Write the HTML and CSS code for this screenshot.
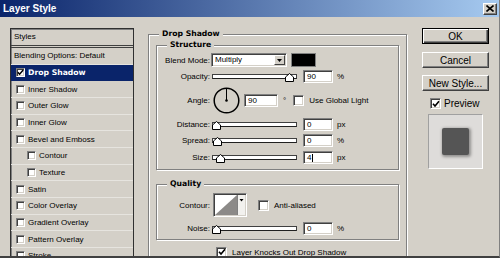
FILE: index.html
```html
<!DOCTYPE html>
<html lang="en">
<head>
  <meta charset="UTF-8">
  <title>Layer Style</title>
  <meta name="viewport" content="width=device-width, initial-scale=1">
  <link rel="stylesheet" href="styles.css">
</head>
<body>

<div class="window">
  <div class="titlebar">
    <span class="title">Layer Style</span>
    <span class="close">
      <svg width="8" height="7" viewBox="0 0 8 7"><path d="M0.5 0.5 L7.5 6.5 M7.5 0.5 L0.5 6.5" stroke="#000" stroke-width="1.6"/></svg>
    </span>
  </div>

  <div class="body">
    <div class="styles">
      <div class="styles-head">Styles</div>
      <div class="item">Blending Options: Default</div>
      <div class="item selected"><span class="cb sm"><svg width="7" height="7" viewBox="0 0 7 7"><polyline points="0.8,3.2 2.6,5.2 6.2,1" fill="none" stroke="#000" stroke-width="1.5"/></svg></span>Drop Shadow</div>
      <div class="item"><span class="cb sm"></span>Inner Shadow</div>
      <div class="item"><span class="cb sm"></span>Outer Glow</div>
      <div class="item"><span class="cb sm"></span>Inner Glow</div>
      <div class="item"><span class="cb sm"></span>Bevel and Emboss</div>
      <div class="item sub"><span class="cb sm"></span>Contour</div>
      <div class="item sub"><span class="cb sm"></span>Texture</div>
      <div class="item"><span class="cb sm"></span>Satin</div>
      <div class="item"><span class="cb sm"></span>Color Overlay</div>
      <div class="item"><span class="cb sm"></span>Gradient Overlay</div>
      <div class="item"><span class="cb sm"></span>Pattern Overlay</div>
      <div class="item"><span class="cb sm"></span>Stroke</div>
    </div>

    <fieldset class="group">
      <legend>Drop Shadow</legend>

      <fieldset class="sub-group structure">
        <legend>Structure</legend>

        <div class="row r-blend">
          <span class="lbl">Blend Mode:</span>
          <div class="select">
            <span class="select-text">Multiply</span>
            <span class="arrow-btn"><svg width="5" height="3" viewBox="0 0 5 3"><polygon points="0,0 5,0 2.5,3" fill="#000"/></svg></span>
          </div>
          <span class="swatch"></span>
        </div>

        <div class="row r-opacity">
          <span class="lbl">Opacity:</span>
          <div class="slider">
            <div class="track"></div>
            <svg class="thumb" style="left:73px" width="9" height="9" viewBox="0 0 9 9"><polygon points="0.5,4 4.5,0.5 8.5,4 8.5,8.5 0.5,8.5" fill="#fff" stroke="#000"/></svg>
          </div>
          <span class="num">90</span>
          <span class="unit">%</span>
        </div>

        <div class="row r-angle">
          <span class="lbl">Angle:</span>
          <svg class="dial" width="27" height="27" viewBox="0 0 27 27">
            <circle cx="13.5" cy="13.5" r="12.3" fill="none" stroke="#000" stroke-width="1.5"/>
            <line x1="13.5" y1="13.5" x2="13.5" y2="2" stroke="#000" stroke-width="1"/>
            <circle cx="13.5" cy="13.5" r="1.3" fill="#000"/>
          </svg>
          <span class="num wide">90</span>
          <span class="unit deg">°</span>
          <span class="cb global"></span>
          <span class="cb-text">Use Global Light</span>
        </div>

        <div class="row r-dist">
          <span class="lbl">Distance:</span>
          <div class="slider">
            <div class="track"></div>
            <svg class="thumb" style="left:0px" width="9" height="9" viewBox="0 0 9 9"><polygon points="0.5,4 4.5,0.5 8.5,4 8.5,8.5 0.5,8.5" fill="#fff" stroke="#000"/></svg>
          </div>
          <span class="num">0</span>
          <span class="unit">px</span>
        </div>

        <div class="row r-spread">
          <span class="lbl">Spread:</span>
          <div class="slider">
            <div class="track"></div>
            <svg class="thumb" style="left:1px" width="9" height="9" viewBox="0 0 9 9"><polygon points="0.5,4 4.5,0.5 8.5,4 8.5,8.5 0.5,8.5" fill="#fff" stroke="#000"/></svg>
          </div>
          <span class="num">0</span>
          <span class="unit">%</span>
        </div>

        <div class="row r-size">
          <span class="lbl">Size:</span>
          <div class="slider">
            <div class="track"></div>
            <svg class="thumb" style="left:4px" width="9" height="9" viewBox="0 0 9 9"><polygon points="0.5,4 4.5,0.5 8.5,4 8.5,8.5 0.5,8.5" fill="#fff" stroke="#000"/></svg>
          </div>
          <span class="num">4<span class="caret"></span></span>
          <span class="unit">px</span>
        </div>
      </fieldset>

      <fieldset class="sub-group quality">
        <legend>Quality</legend>

        <div class="row r-contour">
          <span class="lbl">Contour:</span>
          <span class="contour">
            <svg width="30" height="20" viewBox="0 0 30 20">
              <rect x="0" y="0" width="22" height="20" fill="#fff"/>
              <polygon points="0,20 22,0 22,20" fill="#8c8a88"/>
              <rect x="22" y="0" width="1" height="20" fill="#808080"/>
              <rect x="23" y="0" width="7" height="20" fill="#f2f1ee"/>
              <polygon points="24.5,4 28.5,4 26.5,6.5" fill="#000"/>
            </svg>
          </span>
          <span class="cb aa"></span>
          <span class="cb-text">Anti-aliased</span>
        </div>

        <div class="row r-noise">
          <span class="lbl">Noise:</span>
          <div class="slider">
            <div class="track"></div>
            <svg class="thumb" style="left:0px" width="9" height="9" viewBox="0 0 9 9"><polygon points="0.5,4 4.5,0.5 8.5,4 8.5,8.5 0.5,8.5" fill="#fff" stroke="#000"/></svg>
          </div>
          <span class="num">0</span>
          <span class="unit">%</span>
        </div>
      </fieldset>

      <div class="knock">
        <span class="cb"><svg width="8" height="8" viewBox="0 0 8 8"><polyline points="1,3.8 3,6 7,1.2" fill="none" stroke="#000" stroke-width="1.6"/></svg></span>
        <span class="cb-text">Layer Knocks Out Drop Shadow</span>
      </div>
    </fieldset>

    <div class="side">
      <div class="btn default">OK</div>
      <div class="btn cancel">Cancel</div>
      <div class="btn new">New Style...</div>
      <div class="preview-row">
        <span class="cb"><svg width="8" height="8" viewBox="0 0 8 8"><polyline points="1,3.8 3,6 7,1.2" fill="none" stroke="#000" stroke-width="1.6"/></svg></span>
        <span class="preview-text">Preview</span>
      </div>
      <div class="preview">
        <div class="preview-square"></div>
      </div>
    </div>
  </div>
</div>

</body>
</html>
```

FILE: styles.css
```css
body {
  margin: 0;
  font-family: "Liberation Sans", Arial, sans-serif;
  font-size: 8px;
  color: #000;
}
.window {
  width: 500px;
  height: 258px;
  box-sizing: border-box;
  background: #d4d0c8;
  border-right: 1px solid #808080;
  border-bottom: 2px solid #404040;
  overflow: hidden;
}
.titlebar {
  height: 17px;
  display: flex;
  align-items: center;
  justify-content: space-between;
  background: linear-gradient(to right, #0a246a, #a6caf0);
}
.title {
  padding-left: 3px;
  color: #fff;
  font-weight: bold;
  font-size: 10px;
}
.close {
  width: 14px;
  height: 12px;
  margin-right: 2px;
  box-sizing: border-box;
  background: #d4d0c8;
  border: 1px solid;
  border-color: #fff #404040 #404040 #fff;
  box-shadow: inset -1px -1px #808080;
  display: flex;
  align-items: center;
  justify-content: center;
}
.body {
  display: flex;
  align-items: flex-start;
  padding: 11px 0 0 10px;
}

/* styles list */
.styles {
  width: 124px;
  height: 240px;
  box-sizing: border-box;
  border: 1px solid #303030;
  box-shadow: inset 1px 1px #808080;
  flex: none;
}
.styles-head {
  height: 16px;
  line-height: 16px;
  padding-left: 3px;
  border-bottom: 3px double #404040;
}
.item {
  height: 16.67px;
  box-sizing: border-box;
  border-bottom: 1px solid #e6e4df;
  display: flex;
  align-items: center;
  padding-left: 3px;
  white-space: nowrap;
}
.item .cb {
  margin: 0 3px 0 2px;
}
.item.sub {
  padding-left: 14px;
}
.item.selected {
  background: #0a246a;
  color: #fff;
  font-family: "DejaVu Sans", sans-serif;
  font-weight: bold;
  font-size: 7.7px;
  border-bottom-color: #0a246a;
}

/* checkboxes */
.cb {
  width: 11px;
  height: 11px;
  box-sizing: border-box;
  flex: none;
  background: #fff;
  border: 1px solid;
  border-color: #808080 #fff #fff #808080;
  box-shadow: inset 1px 1px #404040, inset -1px -1px #d4d0c8;
  display: flex;
  align-items: center;
  justify-content: center;
}
.cb.sm {
  width: 9px;
  height: 9px;
}
.cb-text {
  margin-left: 5px;
  white-space: nowrap;
}

/* group boxes */
fieldset {
  margin: 0;
  padding: 0;
  min-width: 0;
  border: 1px solid #808080;
  box-shadow: inset 1px 1px 0 #fff, 1px 1px 0 #fff;
}
legend {
  margin-left: 10px;
  padding: 0 3px;
  line-height: 10px;
  background: #d4d0c8;
  font-family: "DejaVu Sans", sans-serif;
  font-weight: bold;
  font-size: 7.7px;
}
.group {
  width: 259px;
  min-height: 240px;
  box-sizing: border-box;
  margin: 1px 0 0 14px;
  padding: 1px 7px 0 7px;
  flex: none;
}
.group > legend {
  margin-left: 3px;
}
.structure {
  padding-bottom: 3px;
}
.quality {
  margin-top: 9px;
  padding-bottom: 3px;
}

.row {
  display: flex;
  align-items: center;
}
.lbl {
  width: 53px;
  text-align: right;
  flex: none;
  white-space: nowrap;
}
.r-blend { height: 16px; margin-top: 2px; }
.r-opacity { height: 16px; }
.r-angle { height: 28px; margin-top: 2px; }
.r-dist { height: 16px; margin-top: 2px; }
.r-spread, .r-size { height: 17px; }
.r-contour { height: 24px; margin-top: 4px; }
.r-noise { height: 16px; margin-top: 3px; }

.select {
  width: 76px;
  height: 14px;
  margin-left: 1px;
  box-sizing: border-box;
  background: #fff;
  border: 1px solid;
  border-color: #808080 #fff #fff #808080;
  box-shadow: inset 1px 1px #404040, inset -1px -1px #d4d0c8;
  display: flex;
  align-items: stretch;
  padding: 1px;
}
.select-text {
  flex: 1;
  padding-left: 2px;
  line-height: 10px;
}
.arrow-btn {
  width: 11px;
  box-sizing: border-box;
  background: #d4d0c8;
  border: 1px solid;
  border-color: #fff #404040 #404040 #fff;
  display: flex;
  align-items: center;
  justify-content: center;
}
.swatch {
  width: 25px;
  height: 14px;
  margin-left: 4px;
  box-sizing: border-box;
  background: #000;
  border: 1px solid #808080;
}

.slider {
  position: relative;
  width: 85px;
  height: 10px;
  margin: 3px 0 0 2px;
  flex: none;
}
.track {
  height: 5px;
  margin-top: 1px;
  box-sizing: border-box;
  background: #fff;
  border: 1px solid #404040;
  border-bottom-color: #202020;
}
.thumb {
  position: absolute;
  top: 0;
}

.num {
  width: 30px;
  height: 13px;
  margin-left: 6px;
  box-sizing: border-box;
  background: #fff;
  border: 1px solid;
  border-color: #808080 #fff #fff #808080;
  box-shadow: inset 1px 1px #404040, inset -1px -1px #d4d0c8;
  padding-left: 3px;
  line-height: 11px;
  display: flex;
  align-items: center;
  flex: none;
}
.num.wide {
  width: 34px;
  margin-left: 4px;
}
.caret {
  width: 1px;
  height: 8px;
  margin-left: 1px;
  background: #000;
}
.unit {
  margin-left: 4px;
}
.unit.deg {
  margin-left: 5px;
}
.dial {
  margin-left: 3px;
  flex: none;
}
.cb.global {
  margin-left: 7px;
}
.contour {
  width: 34px;
  height: 24px;
  margin-left: 3px;
  box-sizing: border-box;
  border: 1px solid;
  border-color: #808080 #fff #fff #808080;
  box-shadow: inset 1px 1px #404040;
  padding: 1px;
  display: flex;
}
.cb.aa {
  margin-left: 11px;
}

.knock {
  height: 14px;
  margin-top: 5px;
  padding-left: 60px;
  display: flex;
  align-items: center;
}

/* right column */
.side {
  width: 67px;
  margin-left: 15px;
  flex: none;
}
.btn {
  height: 16px;
  box-sizing: border-box;
  border: 1px solid;
  border-color: #fff #404040 #404040 #fff;
  box-shadow: inset -1px -1px #808080;
  font-size: 10px;
  display: flex;
  align-items: center;
  justify-content: center;
}
.btn.default {
  border-color: #000;
  box-shadow: inset 1px 1px #fff, inset -1px -1px #404040, inset -2px -2px #808080;
}
.btn.cancel {
  margin-top: 8px;
}
.btn.new {
  margin-top: 7px;
}
.preview-row {
  height: 13px;
  margin-top: 6px;
  padding-left: 8px;
  display: flex;
  align-items: center;
}
.preview-text {
  margin-left: 3px;
  font-size: 10px;
}
.preview {
  width: 55px;
  height: 55px;
  margin: 4px 0 0 6px;
  box-sizing: border-box;
  background: #dedcda;
  border: 1px solid;
  border-color: #a0a0a0 #fff #fff #a0a0a0;
  padding: 13px;
}
.preview-square {
  width: 27px;
  height: 27px;
  background: #555;
  border-radius: 2px;
  box-shadow: 1px 1px 3px 1px rgba(0, 0, 0, 0.35);
}
```
